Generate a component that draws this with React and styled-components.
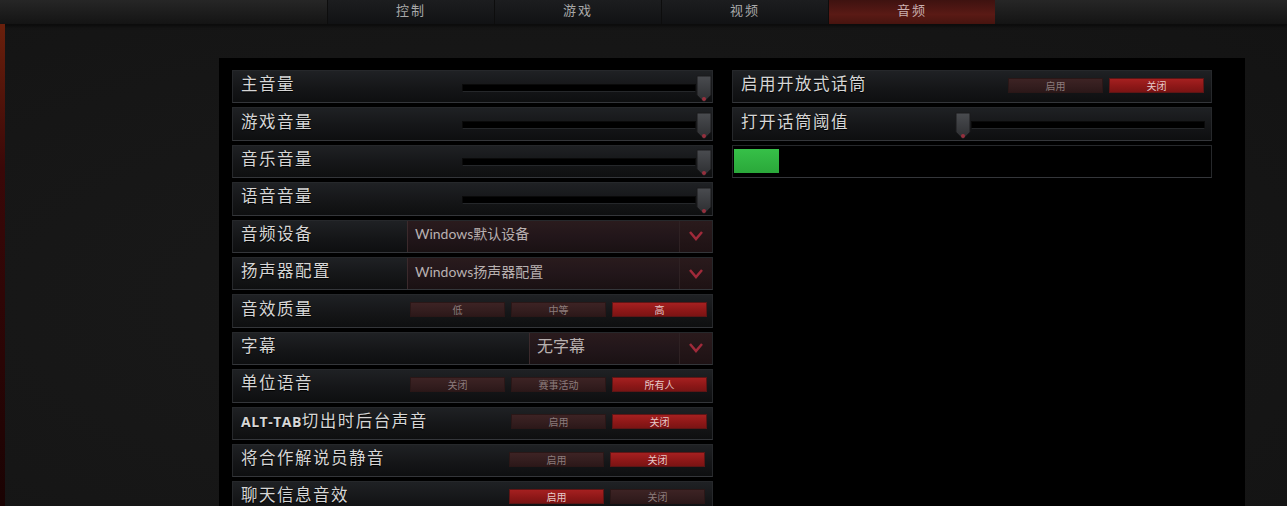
import React from 'react'
import styled, { createGlobalStyle } from 'styled-components'

const Global = createGlobalStyle`
  html, body {
    margin: 0;
    padding: 0;
    background: #171717;
    font-family: "Noto Sans CJK SC", "Noto Sans", sans-serif;
    color: #d8d8d8;
    overflow: hidden;
  }
`

const Page = styled.div`
  width: 1287px;
  height: 506px;
  display: flex;
  flex-direction: column;
  background: radial-gradient(ellipse at 40% 60%, #1a1a1a 0%, #161616 60%, #131313 100%);
`

const TopBar = styled.div`
  height: 24px;
  flex: none;
  display: flex;
  padding-left: 327px;
  background: linear-gradient(#262626, #141414);
  box-shadow: 0 1px 0 #0c0c0c, 0 2px 3px rgba(0,0,0,0.6);
`

const Tab = styled.div`
  width: 167px;
  height: 24px;
  display: flex;
  justify-content: center;
  padding-top: 0;
  line-height: 20px;
  box-sizing: border-box;
  font-size: 13px;
  letter-spacing: 2px;
  color: ${p => (p.$active ? '#c9b0b0' : '#a9a9a9')};
  border-left: 1px solid #0d0d0d;
  background: ${p =>
    p.$active
      ? 'linear-gradient(#3e1210, #5a1a15 60%, #47140f)'
      : 'linear-gradient(#1c1d1f, #111214)'};
`

const Body = styled.div`
  flex: 1;
  display: flex;
  min-height: 0;
`

const Strip = styled.div`
  width: 5px;
  flex: none;
  background: linear-gradient(#6a200c, #3a0808 30%, #2a0505 70%, #1a0303);
`

const Panel = styled.div`
  margin: 34px 0 0 214px;
  width: 1026px;
  background: #000;
  padding: 12px 0 0 13px;
  box-sizing: border-box;
  display: grid;
  grid-template-columns: 481px 480px;
  column-gap: 19px;
  align-content: start;
`

const Column = styled.div`
  display: flex;
  flex-direction: column;
  gap: 4px;
`

const Row = styled.div`
  height: 33.4px;
  box-sizing: border-box;
  display: flex;
  align-items: center;
  border: 1px solid #26282b;
  border-bottom-color: #34363a;
  background: ${p => (p.$plain ? '#000' : 'linear-gradient(#1f2124, #151618 55%, #0e0f10)')};
`

const Label = styled.div`
  padding: 0 0 7px 8px;
  font-size: 16.5px;
  letter-spacing: 1.5px;
  color: #d6d6d6;
  white-space: nowrap;
  flex: 1;
  text-shadow: 0 1px 1px #000;
`

const Latin = styled.span`
  font-family: "Open Sans", "DejaVu Sans", sans-serif;
  font-weight: 700;
  font-size: 14px;
  letter-spacing: 0.5px;
`

const SliderBox = styled.div`
  width: ${p => (p.$left ? 256 : 250)}px;
  height: 100%;
  flex: none;
  display: flex;
  align-items: center;
  flex-direction: ${p => (p.$left ? 'row-reverse' : 'row')};
  padding-right: ${p => (p.$left ? 6 : 0)}px;
  box-sizing: border-box;
`

const Track = styled.div`
  flex: 1;
  height: 6px;
  margin-top: 2px;
  background: #000;
  border: 1px solid #0a0a0a;
  border-bottom-color: #25272a;
`

const Knob = () => (
  <svg width="16" height="28" viewBox="0 0 16 28" style={{ flex: 'none', marginTop: 4 }}>
    <defs>
      <linearGradient id="kg" x1="0" y1="0" x2="0" y2="1">
        <stop offset="0" stopColor="#4a4c50" />
        <stop offset="1" stopColor="#2c2d30" />
      </linearGradient>
    </defs>
    <path d="M1 1 H15 V20 L8 27 L1 20 Z" fill="url(#kg)" stroke="#1a1a1c" />
    <circle cx="8" cy="24" r="2" fill="#b03040" opacity="0.8" />
  </svg>
)

const Dropdown = styled.div`
  width: ${p => p.$w}px;
  height: 100%;
  flex: none;
  display: flex;
  align-items: center;
  box-sizing: border-box;
  border-left: 1px solid #3b2a2c;
  background: linear-gradient(#2a1b1d, #22161a 50%, #1a1113);
`

const DropText = styled.div`
  flex: 1;
  padding: 0 0 6px 7px;
  font-size: 14px;
  color: #b8b0b0;
  white-space: nowrap;
`

const Word = styled.span`
  font-family: ${p => (p.$cjk ? 'inherit' : '"Lato", "Open Sans", sans-serif')};
  font-size: ${p => (p.$cjk ? 16 : 14)}px;
`

const Arrow = styled.div`
  width: 32px;
  height: 100%;
  flex: none;
  display: flex;
  align-items: center;
  justify-content: center;
  border-left: 1px solid #2e2123;
  background: linear-gradient(#2a1a1c, #1e1214);
`

const Buttons = styled.div`
  display: flex;
  gap: 6px;
  margin-right: ${p => p.$mr || 5}px;
  margin-bottom: 3px;
`

const Btn = styled.div`
  width: 95px;
  height: 15px;
  display: flex;
  align-items: center;
  justify-content: center;
  font-size: 10px;
  color: ${p => (p.$on ? '#e6c9c9' : '#8c7c7c')};
  border: 1px solid ${p => (p.$on ? '#5e1515' : '#2a1717')};
  box-sizing: border-box;
  background: ${p =>
    p.$on
      ? 'linear-gradient(#a52020, #8c1717 60%, #7a1414)'
      : 'linear-gradient(#3d2324, #331d1e 60%, #2c1819)'};
`

const Meter = styled.div`
  width: 45px;
  height: 24px;
  margin-left: 1px;
  background: linear-gradient(#36c048, #2aa83a);
`

const Slider = ({ left }) => (
  <SliderBox $left={left}>
    <Track />
    <Knob />
  </SliderBox>
)

const Chevron = () => (
  <svg width="16" height="12" viewBox="0 0 16 12">
    <path d="M2 2 L8 9 L14 2" fill="none" stroke="#a02a3a" strokeWidth="2.5" />
  </svg>
)

const Select = ({ w, children }) => (
  <Dropdown $w={w}>
    <DropText>{children}</DropText>
    <Arrow>
      <Chevron />
    </Arrow>
  </Dropdown>
)

const Group = ({ items, on, mr }) => (
  <Buttons $mr={mr}>
    {items.map((t, i) => (
      <Btn key={t} $on={i === on}>
        {t}
      </Btn>
    ))}
  </Buttons>
)

export default function App() {
  return (
    <>
      <Global />
      <Page>
        <TopBar>
          <Tab>控制</Tab>
          <Tab>游戏</Tab>
          <Tab>视频</Tab>
          <Tab $active>音频</Tab>
        </TopBar>
        <Body>
          <Strip />
          <Panel>
            <Column>
              <Row>
                <Label>主音量</Label>
                <Slider />
              </Row>
              <Row>
                <Label>游戏音量</Label>
                <Slider />
              </Row>
              <Row>
                <Label>音乐音量</Label>
                <Slider />
              </Row>
              <Row>
                <Label>语音音量</Label>
                <Slider />
              </Row>
              <Row>
                <Label>音频设备</Label>
                <Select w={305}>
                  <Word>Windows</Word>默认设备
                </Select>
              </Row>
              <Row>
                <Label>扬声器配置</Label>
                <Select w={305}>
                  <Word>Windows</Word>扬声器配置
                </Select>
              </Row>
              <Row>
                <Label>音效质量</Label>
                <Group items={['低', '中等', '高']} on={2} />
              </Row>
              <Row>
                <Label>字幕</Label>
                <Select w={183}>
                  <Word $cjk>无字幕</Word>
                </Select>
              </Row>
              <Row>
                <Label>单位语音</Label>
                <Group items={['关闭', '赛事活动', '所有人']} on={2} />
              </Row>
              <Row>
                <Label>
                  <Latin>ALT-TAB</Latin>切出时后台声音
                </Label>
                <Group items={['启用', '关闭']} on={1} />
              </Row>
              <Row>
                <Label>将合作解说员静音</Label>
                <Group items={['启用', '关闭']} on={1} mr={7} />
              </Row>
              <Row>
                <Label>聊天信息音效</Label>
                <Group items={['启用', '关闭']} on={0} mr={7} />
              </Row>
            </Column>
            <Column>
              <Row>
                <Label>启用开放式话筒</Label>
                <Group items={['启用', '关闭']} on={1} mr={7} />
              </Row>
              <Row>
                <Label>打开话筒阈值</Label>
                <Slider left />
              </Row>
              <Row $plain>
                <Meter />
              </Row>
            </Column>
          </Panel>
        </Body>
      </Page>
    </>
  )
}
